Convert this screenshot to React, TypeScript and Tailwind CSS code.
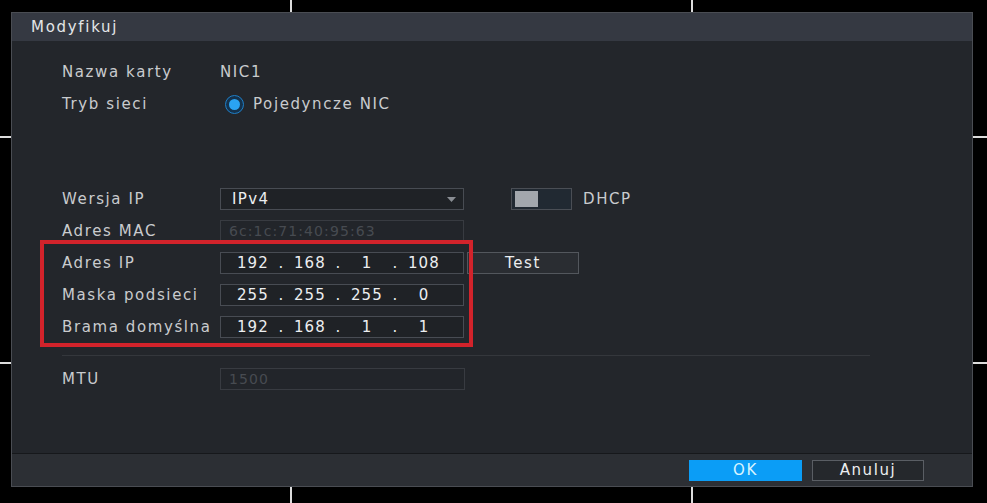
const font = { fontFamily: '"DejaVu Sans", "Liberation Sans", sans-serif' };

function Row({ label, children }: { label: string; children?: React.ReactNode }) {
  return (
    <div className="flex h-[32px] items-center">
      <div className="w-[158px] text-[15px] tracking-[1.6px] text-[#c9cbce]">{label}</div>
      {children}
    </div>
  );
}

function IpInput({ parts }: { parts: string[] }) {
  return (
    <div className="flex h-[22px] w-[244px] items-center border border-[#484c53] bg-[#1f2226] pl-[10px] text-[15px] tracking-[1.2px] text-[#eceef0]">
      {parts.map((p, i) => (
        <div key={i} className="flex">
          <span className="w-[44px] text-center">{p}</span>
          {i < 3 && <span className="w-[13px] text-center">.</span>}
        </div>
      ))}
    </div>
  );
}

function Line({ className }: { className: string }) {
  return <div className={`absolute bg-[#dcdcdc] ${className}`} />;
}

export default function App() {
  return (
    <div className="relative h-[503px] w-[987px] overflow-hidden bg-black pl-[11px] pt-[12px]" style={font}>
      {/* crosshair marks */}
      <Line className="left-[290px] top-0 h-[12px] w-[2px]" />
      <Line className="left-[691px] top-0 h-[12px] w-[2px]" />
      <Line className="left-[290px] top-[487px] h-[16px] w-[2px]" />
      <Line className="left-[691px] top-[487px] h-[16px] w-[2px]" />
      <Line className="left-0 top-[136px] h-[2px] w-[11px]" />
      <Line className="left-0 top-[362px] h-[2px] w-[11px]" />
      <Line className="left-[973px] top-[136px] h-[2px] w-[14px]" />
      <Line className="left-[973px] top-[362px] h-[2px] w-[14px]" />

      <div className="relative flex h-[475px] w-[962px] flex-col border border-[#4a4d53] bg-[#23262b]">
        {/* title */}
        <div className="flex h-[28px] items-center bg-[#353942] pl-[19px] text-[15px] tracking-[1.7px] text-[#e4e6e8]">
          Modyfikuj
        </div>

        {/* body */}
        <div className="flex-1 pl-[50px] pt-[15px]">
          <Row label="Nazwa karty">
            <span className="text-[15px] tracking-[1.6px] text-[#c9cbce]">NIC1</span>
          </Row>
          <Row label="Tryb sieci">
            <div className="ml-[5px] flex h-[19px] w-[19px] items-center justify-center rounded-full border border-[#1f7fc8] bg-[#14324d]">
              <div className="h-[11px] w-[11px] rounded-full bg-[#2aa3f3]" />
            </div>
            <span className="ml-[9px] text-[15px] tracking-[1.6px] text-[#c9cbce]">Pojedyncze NIC</span>
          </Row>

          <div className="h-[63px]" />

          <Row label="Wersja IP">
            <div className="flex h-[22px] w-[244px] items-center justify-between border border-[#484c53] bg-[#1f2226] pl-[11px] pr-[7px] text-[15px] tracking-[1.4px] text-[#eceef0]">
              <span>IPv4</span>
              <svg width="9" height="5" viewBox="0 0 9 5">
                <path d="M0 0h9L4.5 5z" fill="#8a8e94" />
              </svg>
            </div>
            <div className="ml-[47px] flex h-[22px] w-[61px] items-center border border-[#4a4e55] bg-[#212932] pl-[3px]">
              <div className="h-[16px] w-[23px] bg-[#a3a7ad]" />
            </div>
            <span className="ml-[11px] text-[15px] tracking-[1.6px] text-[#c9cbce]">DHCP</span>
          </Row>
          <Row label="Adres MAC">
            <div className="flex h-[22px] w-[244px] items-center border border-[#383b41] bg-[#22252a] pl-[8px] text-[14px] tracking-[1.1px] text-[#474b51]">
              6c:1c:71:40:95:63
            </div>
          </Row>
          <Row label="Adres IP">
            <IpInput parts={["192", "168", "1", "108"]} />
            <div className="ml-[3px] flex h-[22px] w-[112px] items-center justify-center border border-[#53575d] bg-[#2a2d32] text-[15px] tracking-[1.6px] text-[#eceef0]">
              Test
            </div>
          </Row>
          <Row label="Maska podsieci">
            <IpInput parts={["255", "255", "255", "0"]} />
          </Row>
          <Row label="Brama domyślna">
            <IpInput parts={["192", "168", "1", "1"]} />
          </Row>

          <div className="mt-[12px] h-px w-[808px] bg-[#34373c]" />

          <div className="mt-[7px]">
            <Row label="MTU">
              <div className="flex h-[22px] w-[245px] items-center border border-[#383b41] bg-[#22252a] pl-[8px] text-[14px] tracking-[1.1px] text-[#474b51]">
                1500
              </div>
            </Row>
          </div>

          {/* red annotation box */}
          <div className="absolute left-[28px] top-[227px] h-[107px] w-[433px] border-4 border-[#d2232b]" />
        </div>

        {/* footer */}
        <div className="flex h-[33px] items-center justify-end gap-[10px] border-t border-[#16181b] bg-[#2c2f34] pr-[48px]">
          <div className="flex h-[21px] w-[113px] items-center justify-center bg-[#0b9df6] text-[15px] tracking-[1.6px] text-[#d8f4ff]">
            OK
          </div>
          <div className="flex h-[21px] w-[112px] items-center justify-center border border-[#5a5e64] bg-[#25282c] text-[15px] tracking-[1.6px] text-[#eceef0]">
            Anuluj
          </div>
        </div>
      </div>
    </div>
  );
}
